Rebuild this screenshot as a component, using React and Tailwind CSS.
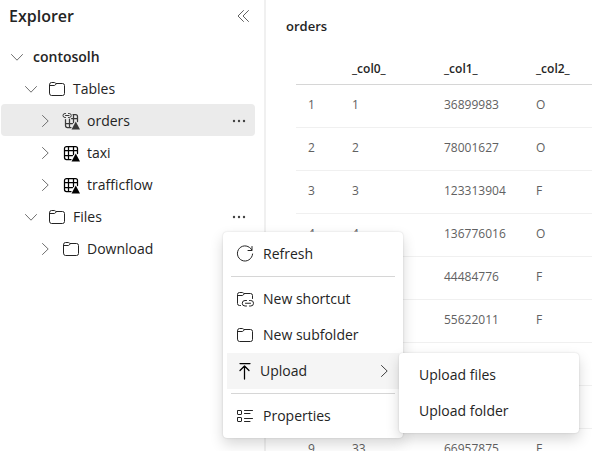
const orders = [
  ['1', '36899983', 'O'],
  ['2', '78001627', 'O'],
  ['3', '123313904', 'F'],
  ['4', '136776016', 'O'],
  ['5', '44484776', 'F'],
  ['6', '55622011', 'F'],
  ['7', '39135157', 'O'],
  ['32', '130056881', 'O'],
  ['33', '66957875', 'F'],
];

function Icon({ children, className = '' }) {
  return (
    <svg
      viewBox="0 0 18 18"
      fill="none"
      stroke="currentColor"
      strokeLinecap="round"
      strokeLinejoin="round"
      aria-hidden="true"
      className={`size-[18px] shrink-0 ${className}`}
    >
      {children}
    </svg>
  );
}

function ChevronDown() {
  return (
    <Icon className="text-[#707070]">
      <path d="M3.5 6.5 9 12.2l5.5-5.7" />
    </Icon>
  );
}

function ChevronRight({ className = 'text-[#707070]' }) {
  return (
    <Icon className={className}>
      <path d="M6.5 3.5 12.200 9l-5.700 5.500" />
    </Icon>
  );
}

function Folder() {
  return (
    <Icon className="text-[#242424]">
      <path d="M1.5 4.5a2 2 0 0 1 2-2h2.600c.5 0 .9.2 1.200.5l.6.500h6.600a2 2 0 0 1 2 2v8a2 2 0 0 1-2 2h-11a2 2 0 0 1-2-2z" />
      <path d="M1.500 5.500h4.600c.5 0 .9-.2 1.200-.500l1-1.200" />
    </Icon>
  );
}

function FolderLink() {
  return (
    <Icon className="text-[#242424]">
      <path d="M4.500 15.500h-1a2 2 0 0 1-2-2v-9a2 2 0 0 1 2-2h2.600c.5 0 .9.2 1.200.5l.6.500h6.600a2 2 0 0 1 2 2v3" />
      <path d="M1.500 5.500h4.600c.5 0 .9-.2 1.200-.500l1-1.200" />
      <path d="M10.500 10.500h-1.500a2.750 2.750 0 0 0 0 5.500h1.500M13.500 10.500h1.250a2.750 2.750 0 0 1 0 5.500h-1.250M9.500 13.250h5" />
    </Icon>
  );
}

function DeltaTable() {
  return (
    <Icon className="text-black">
      <path
        d="M9 15.500h-4.500a2 2 0 0 1-2-2v-9a2 2 0 0 1 2-2h9a2 2 0 0 1 2 2v5M2.500 6.500h13M2.500 11.500h8M6.500 2.500v13M11.500 2.500v8"
        strokeWidth="1.250"
      />
      <path d="M13.750 9.500 18 17.500H9.500z" fill="currentColor" stroke="none" />
    </Icon>
  );
}

function DeltaTableLink() {
  return (
    <Icon className="text-[#3a3a3a]">
      <path
        d="M3.500 7.500v6a2 2 0 0 0 2 2h3.500M11 2.500h2.500a2 2 0 0 1 2 2v5M3.500 11.500h7M9.500 6.500h6M7.500 7v8.500M11.500 2.500v8"
        strokeWidth="1.250"
      />
      <path d="M3.500 1.500h-.5a1.750 1.750 0 0 0 0 4h.5M6.500 1.500h.75a1.750 1.750 0 0 1 0 4h-.75M3.500 3.500h3.500" />
      <path d="M13.750 9.500 18 17.500H9.500z" fill="currentColor" stroke="none" />
    </Icon>
  );
}

function Refresh() {
  return (
    <Icon className="text-[#242424]">
      <path d="M15.800 5A7.600 7.600 0 1 0 16.600 9M16 1.500v4h-4" />
    </Icon>
  );
}

function UploadArrow() {
  return (
    <Icon className="text-black">
      <path d="M4 1.500h10M8.500 17V4M4 8.500 8.500 4 13 8.500" strokeWidth="1.250" />
    </Icon>
  );
}

function PropertiesList() {
  return (
    <Icon className="text-[#242424]">
      <rect x="1.500" y="3.500" width="4" height="4" rx="0.500" />
      <rect x="1.500" y="10.500" width="4" height="4" rx="0.500" />
      <path d="M8.500 3.500h8M8.500 6.500h5.500M8.500 11.500h8M8.500 14.500h5.500" />
    </Icon>
  );
}

function MoreButton({ label }) {
  return (
    <button type="button" aria-label={label} className="ml-auto mr-1.5 flex size-5 items-center justify-center">
      <svg viewBox="0 0 14 4" fill="#424242" aria-hidden="true" className="h-1 w-3.5">
        <circle cx="2" cy="2" r="1.200" />
        <circle cx="7" cy="2" r="1.200" />
        <circle cx="12" cy="2" r="1.200" />
      </svg>
    </button>
  );
}

function TreeItem({ label, icon, open, indent, selected, more }) {
  return (
    <div className={`flex h-8 items-center rounded pt-0.5 ${indent} ${selected ? 'bg-[#ebebeb]' : ''}`}>
      <button type="button" aria-expanded={open} className="flex items-center">
        {open ? <ChevronDown /> : <ChevronRight />}
        {icon && <span className="ml-2 flex">{icon}</span>}
        <span className={icon ? 'ml-[7px]' : 'ml-[7px] font-semibold'}>{label}</span>
      </button>
      {more && <MoreButton label={`More options for ${label}`} />}
    </div>
  );
}

function MenuItem({ icon, children, active }) {
  return (
    <button
      type="button"
      role="menuitem"
      className={`flex h-9 w-full items-center pl-[9px] text-left ${active ? 'gap-1.5 bg-[#f5f5f5]' : 'gap-[9px]'}`}
    >
      {icon}
      {children}
    </button>
  );
}

function Divider() {
  return <hr className="mx-1 my-1 border-[#d6d6d6]" />;
}

function FilesMenu() {
  return (
    <div
      role="menu"
      className="absolute left-[222px] top-full z-10 w-[180px] rounded bg-white p-1 shadow-[0_0_2px_rgba(0,0,0,0.16),0_6px_14px_rgba(0,0,0,0.16)]"
    >
      <MenuItem icon={<Refresh />}>Refresh</MenuItem>
      <Divider />
      <MenuItem icon={<FolderLink />}>New shortcut</MenuItem>
      <MenuItem icon={<Folder />}>New subfolder</MenuItem>
      <div className="relative">
        <MenuItem icon={<UploadArrow />} active>
          Upload
          <span className="ml-auto mr-1.5">
            <ChevronRight className="text-[#424242]" />
          </span>
        </MenuItem>
        <div
          role="menu"
          className="absolute left-full top-0 w-[180px] rounded bg-white p-1 shadow-[0_0_2px_rgba(0,0,0,0.16),0_6px_14px_rgba(0,0,0,0.16)]"
        >
          <button type="button" role="menuitem" className="flex h-9 w-full items-center pl-4">
            Upload files
          </button>
          <button type="button" role="menuitem" className="flex h-9 w-full items-center pl-4">
            Upload folder
          </button>
        </div>
      </div>
      <Divider />
      <MenuItem icon={<PropertiesList />}>Properties</MenuItem>
    </div>
  );
}

function Explorer() {
  return (
    <aside className="w-[266px] shrink-0 border-r-2 border-[#f0f0f0]">
      <header className="flex h-10 items-center justify-between pb-2 pl-[9px] pr-[11px]">
        <h1 className="text-base font-semibold">Explorer</h1>
        <button type="button" aria-label="Collapse explorer">
          <Icon className="text-[#616161]">
            <path d="M8.500 3.500 3 9l5.500 5.500M13.500 3.500 8 9l5.500 5.500" />
          </Icon>
        </button>
      </header>
      <nav aria-label="Lakehouse" className="ml-px mr-[9px]">
        <TreeItem label="contosolh" indent="pl-[7px]" open />
        <TreeItem label="Tables" indent="pl-[21px]" icon={<Folder />} open />
        <TreeItem label="orders" indent="pl-[35px]" icon={<DeltaTableLink />} selected more />
        <TreeItem label="taxi" indent="pl-[35px]" icon={<DeltaTable />} />
        <TreeItem label="trafficflow" indent="pl-[35px]" icon={<DeltaTable />} />
        <div className="relative">
          <TreeItem label="Files" indent="pl-[21px]" icon={<Folder />} open more />
          <FilesMenu />
        </div>
        <TreeItem label="Download" indent="pl-[35px]" icon={<Folder />} />
      </nav>
    </aside>
  );
}

function Preview() {
  return (
    <main className="min-w-0 flex-1 overflow-hidden pl-5 pt-4">
      <h2 className="text-[13px] leading-5 font-semibold">orders</h2>
      <table className="ml-2.5 mt-3.5 w-full table-fixed text-left text-xs">
        <colgroup>
          <col className="w-11" />
          <col className="w-[92px]" />
          <col className="w-[92px]" />
          <col />
        </colgroup>
        <thead>
          <tr className="h-[34px] border-b border-[#d6d6d6]">
            <th aria-label="Row" />
            <th className="pl-3 pt-1 font-semibold">_col0_</th>
            <th className="pl-3 pt-1 font-semibold">_col1_</th>
            <th className="pl-3 pt-1 font-semibold">_col2_</th>
          </tr>
        </thead>
        <tbody className="text-[#616161]">
          {orders.map(([key, customer, status], i) => (
            <tr key={key} className="h-[43px] border-b border-[#f0f0f0]">
              <td className="pb-0.5 pl-3">{i + 1}</td>
              <td className="pb-0.5 pl-3">{key}</td>
              <td className="pb-0.5 pl-3">{customer}</td>
              <td className="pb-0.5 pl-3">{status}</td>
            </tr>
          ))}
        </tbody>
      </table>
    </main>
  );
}

export default function App() {
  return (
    <div className="flex h-screen overflow-hidden bg-white font-['Segoe_UI','Open_Sans',sans-serif] text-sm text-[#242424]">
      <Explorer />
      <Preview />
    </div>
  );
}
